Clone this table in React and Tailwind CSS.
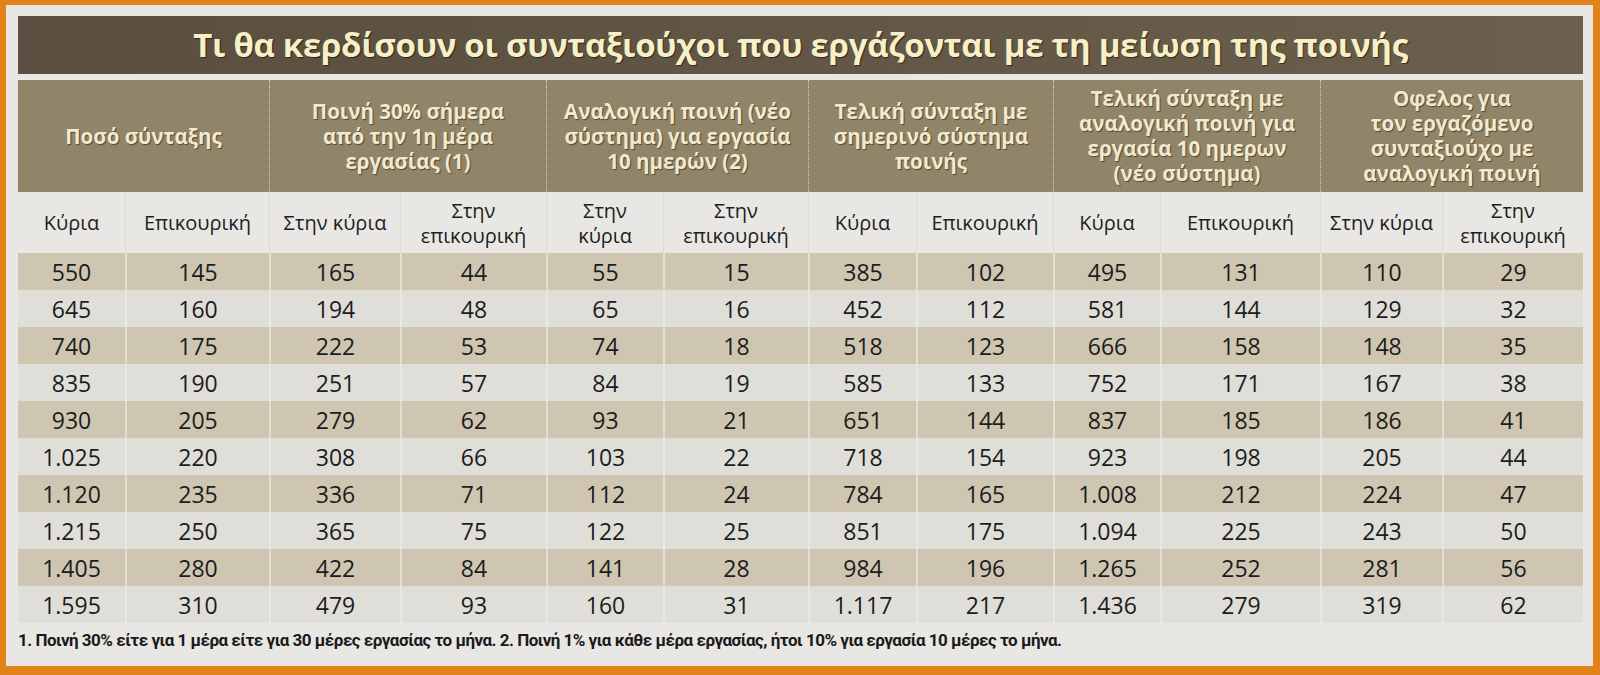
import React from "react";

const COLS =
  "grid grid-cols-[107px_144px_131px_146px_117px_145px_108px_137px_107px_160px_122px_141px]";

const groups = [
  ["Ποσό σύνταξης"],
  ["Ποινή 30% σήμερα", "από την 1η μέρα", "εργασίας (1)"],
  ["Αναλογική ποινή (νέο", "σύστημα) για εργασία", "10 ημερών (2)"],
  ["Τελική σύνταξη με", "σημερινό σύστημα", "ποινής"],
  ["Τελική σύνταξη με", "αναλογική ποινή για", "εργασία 10 ημερων", "(νέο σύστημα)"],
  ["Οφελος για", "τον εργαζόμενο", "συνταξιούχο με", "αναλογική ποινή"],
];

const subs = [
  ["Κύρια"],
  ["Επικουρική"],
  ["Στην κύρια"],
  ["Στην", "επικουρική"],
  ["Στην", "κύρια"],
  ["Στην", "επικουρική"],
  ["Κύρια"],
  ["Επικουρική"],
  ["Κύρια"],
  ["Επικουρική"],
  ["Στην κύρια"],
  ["Στην", "επικουρική"],
];

const rows = [
  ["550", "145", "165", "44", "55", "15", "385", "102", "495", "131", "110", "29"],
  ["645", "160", "194", "48", "65", "16", "452", "112", "581", "144", "129", "32"],
  ["740", "175", "222", "53", "74", "18", "518", "123", "666", "158", "148", "35"],
  ["835", "190", "251", "57", "84", "19", "585", "133", "752", "171", "167", "38"],
  ["930", "205", "279", "62", "93", "21", "651", "144", "837", "185", "186", "41"],
  ["1.025", "220", "308", "66", "103", "22", "718", "154", "923", "198", "205", "44"],
  ["1.120", "235", "336", "71", "112", "24", "784", "165", "1.008", "212", "224", "47"],
  ["1.215", "250", "365", "75", "122", "25", "851", "175", "1.094", "225", "243", "50"],
  ["1.405", "280", "422", "84", "141", "28", "984", "196", "1.265", "252", "281", "56"],
  ["1.595", "310", "479", "93", "160", "31", "1.117", "217", "1.436", "279", "319", "62"],
];

export default function App() {
  return (
    <div className="w-[1600px] h-[675px] bg-[#e2821a] pt-[5px] pl-[6px] pr-[7px] pb-[9px] font-['Open_Sans',sans-serif]">
      <div className="h-full bg-[#e8e7e4] pt-[11px] pl-[12px] pr-[10px] flex flex-col">
        {/* Title */}
        <div className="h-[58px] bg-gradient-to-r from-[#594e3f] to-[#6b5f4d] flex items-center justify-center">
          <h1 className="text-[33px] font-bold text-[#f7f0c6] tracking-[-0.3px] [text-shadow:1px_1px_1px_rgba(0,0,0,0.55)] leading-none pb-[2px]">
            Τι θα κερδίσουν οι συνταξιούχοι που εργάζονται με τη μείωση της ποινής
          </h1>
        </div>

        {/* Group header */}
        <div className={`${COLS} mt-[6px] h-[112px] bg-[#918569]`}>
          {groups.map((lines, i) => (
            <div
              key={i}
              className={`col-span-2 flex flex-col items-center justify-center text-[20.5px] font-bold leading-[25px] text-[#f1ead0] [text-shadow:1px_1px_1px_rgba(40,30,15,0.6)] ${
                i > 0 ? "border-l border-dotted border-[#ddd3b2]" : ""
              }`}
            >
              {lines.map((l, j) => (
                <span key={j} className="whitespace-nowrap">
                  {l}
                </span>
              ))}
            </div>
          ))}
        </div>

        {/* Sub header */}
        <div className={`${COLS} h-[61px]`}>
          {subs.map((lines, i) => (
            <div
              key={i}
              className={`flex flex-col items-center justify-center text-[20px] leading-[25px] text-[#1e1e1e] ${
                i > 0 ? "border-l border-[#dcdad5]" : ""
              }`}
            >
              {lines.map((l, j) => (
                <span key={j} className="whitespace-nowrap">
                  {l}
                </span>
              ))}
            </div>
          ))}
        </div>

        {/* Data rows */}
        <div className="flex flex-col">
          {rows.map((r, ri) => (
            <div
              key={ri}
              className={`${COLS} h-[37px] ${
                ri % 2 === 0 ? "bg-[#cfc6b2]" : "bg-[#e0ded9]"
              }`}
            >
              {r.map((v, ci) => (
                <div
                  key={ci}
                  className={`flex items-center justify-center pt-[2px] text-[23px] text-[#1c1c1c] ${
                    ci > 0
                      ? ri % 2 === 0
                        ? "border-l-2 border-[#e3ded2]"
                        : "border-l-2 border-[#e9e7e3]"
                      : ""
                  }`}
                >
                  {v}
                </div>
              ))}
            </div>
          ))}
        </div>

        {/* Footnote */}
        <div className="h-[43px] pt-[5px] text-[17px] font-bold text-[#1a1a1a] font-['Roboto',sans-serif] tracking-[-0.5px] whitespace-nowrap">
          1. Ποινή 30% είτε για 1 μέρα είτε για 30 μέρες εργασίας το μήνα. 2. Ποινή 1% για κάθε μέρα εργασίας, ήτοι 10% για εργασία 10 μέρες το μήνα.
        </div>
      </div>
    </div>
  );
}
